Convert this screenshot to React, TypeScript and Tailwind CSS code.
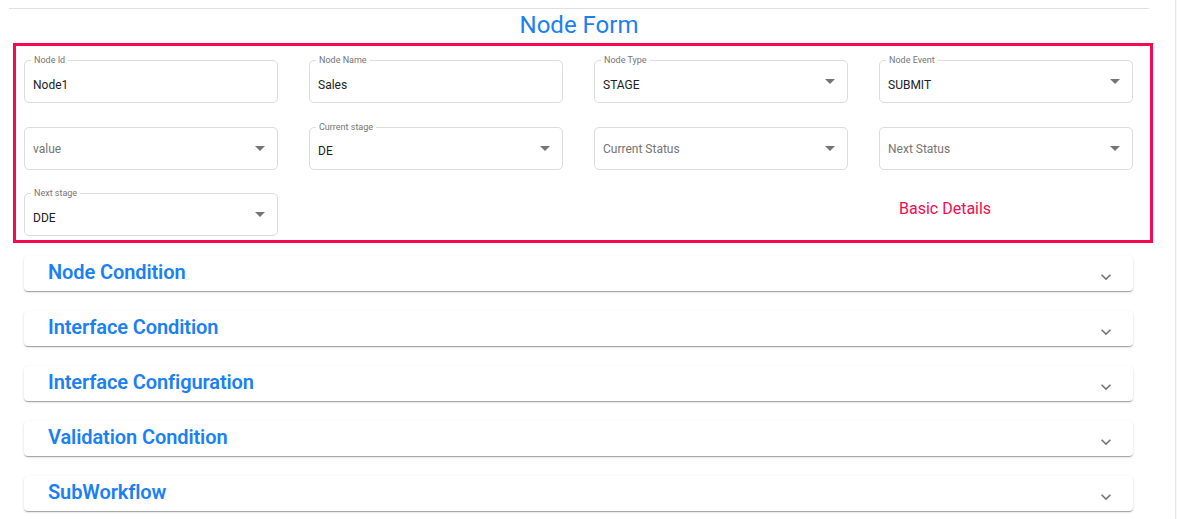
import React from "react";

type FieldProps = {
  label?: string;
  value?: string;
  placeholder?: string;
  select?: boolean;
};

const Caret = () => (
  <svg width="10" height="5" viewBox="0 0 10 5" className="shrink-0">
    <path d="M0 0 L10 0 L5 5 Z" fill="#757575" />
  </svg>
);

const Field = ({ label, value, placeholder, select }: FieldProps) => (
  <div className="relative h-[43px] rounded-[5px] border border-[#dcdcdc] bg-white">
    {label && (
      <span className="absolute -top-[6px] left-[6px] bg-white px-[3px] text-[9px] leading-[11px] text-[#757575]">
        {label}
      </span>
    )}
    <div
      className={`flex h-full items-center pl-[8px] pr-[12px] ${
        label ? "pt-[6px]" : "pt-[1px]"
      }`}
    >
      <span
        className={`flex-1 text-[12px] ${
          value ? "text-[#212121]" : "text-[#757575]"
        }`}
      >
        {value ?? placeholder}
      </span>
      {select && (
        <span className={label ? "-mt-[6px]" : "-mt-[1px]"}>
          <Caret />
        </span>
      )}
    </div>
  </div>
);

const sections = [
  "Node Condition",
  "Interface Condition",
  "Interface Configuration",
  "Validation Condition",
  "SubWorkflow",
];

export default function App() {
  return (
    <div
      className="flex min-h-[519px] w-full bg-white"
      style={{ fontFamily: "Roboto, 'Liberation Sans', sans-serif" }}
    >
      <div className="ml-[9px] w-[1140px] pt-[8px]">
        <div className="border-t border-[#e0e0e0]">
          <h1 className="h-[34px] text-center text-[24px] leading-[32px] text-[#1a80f3]">
            Node Form
          </h1>
        </div>

        <div className="ml-[4px] w-[1140px] border-[3px] border-[#f50a4f] pb-[4px] pl-[8px] pr-[17px] pt-[14px]">
          <div className="grid grid-cols-4 gap-x-[31px] gap-y-[23.5px]">
            <Field label="Node Id" value="Node1" />
            <Field label="Node Name" value="Sales" />
            <Field label="Node Type" value="STAGE" select />
            <Field label="Node Event" value="SUBMIT" select />

            <Field placeholder="value" select />
            <Field label="Current stage" value="DE" select />
            <Field placeholder="Current Status" select />
            <Field placeholder="Next Status" select />

            <Field label="Next stage" value="DDE" select />
            <div />
            <div />
            <div className="pl-[20px] pt-[4px] text-[16px] text-[#f50a4f]">
              Basic Details
            </div>
          </div>
        </div>

        <div className="ml-[15px] mr-[16px] mt-[13px] flex flex-col gap-[20px]">
          {sections.map((s) => (
            <div
              key={s}
              className="flex h-[35px] items-center justify-between rounded-[4px] bg-white pl-[24px] pr-[17px] shadow-[0_2px_1px_-1px_rgba(0,0,0,0.2),0_1px_1px_0_rgba(0,0,0,0.14),0_1px_3px_0_rgba(0,0,0,0.12)]"
            >
              <span className="-mt-[4px] text-[20px] font-semibold leading-none tracking-[-0.1px] text-[#1a80f3]">
                {s}
              </span>
              <svg
                width="20"
                height="20"
                viewBox="0 0 24 24"
                className="mt-[7px]"
              >
                <path
                  d="M16.59 8.59 12 13.17 7.41 8.59 6 10l6 6 6-6z"
                  fill="#757575"
                />
              </svg>
            </div>
          ))}
        </div>
      </div>
      <div className="ml-auto w-[2px] border-l border-[#e6e6e6] bg-[#f8f8f8]" />
    </div>
  );
}
